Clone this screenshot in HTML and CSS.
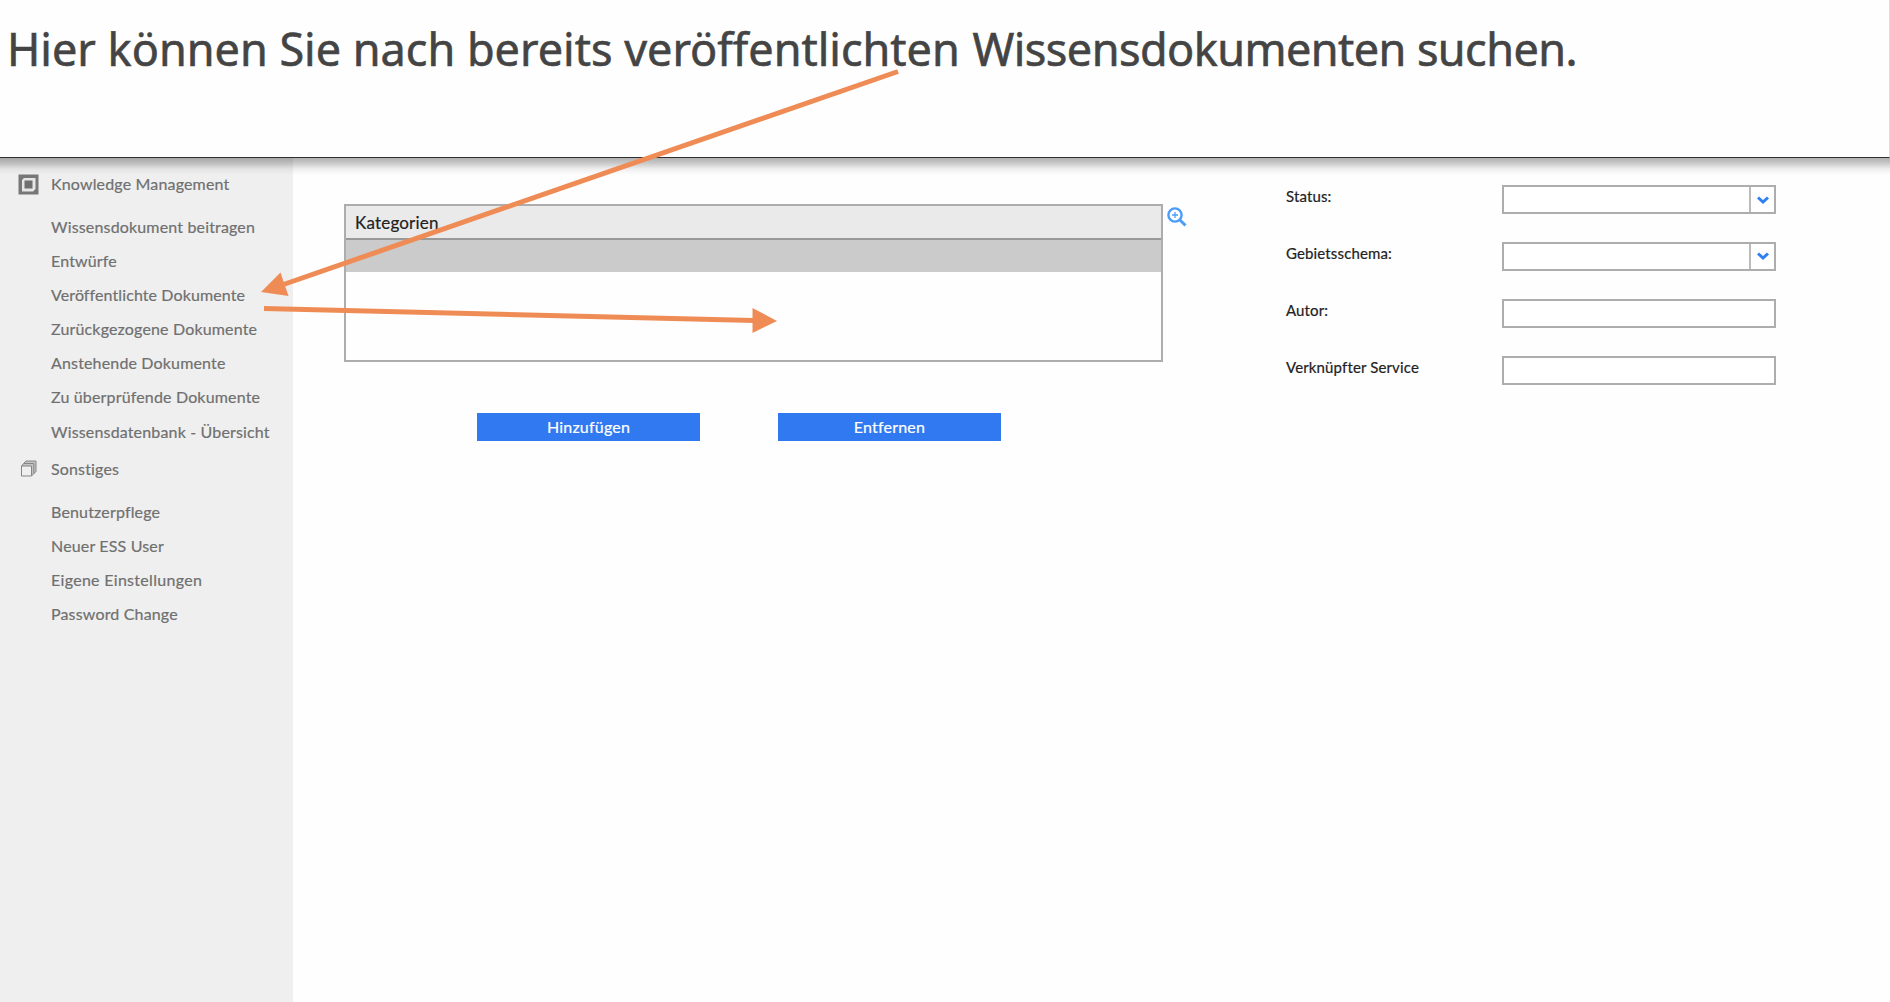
FILE: index.html
```html
<!DOCTYPE html>
<html lang="de">
<head>
<meta charset="utf-8">
<title>Wissensdokumente suchen</title>
<link rel="stylesheet" href="styles.css">
</head>
<body>
<header class="banner"><h1>Hier können Sie nach bereits veröffentlichten <span class="tight">Wissensdokumenten suchen.</span></h1></header>
<div class="workspace">
  <nav class="sidebar">
    <div class="group">
      <svg class="icon" width="21" height="21" viewBox="0 0 21 21"><path d="M0.500 0.500H20.500V20.500H0.500z" fill="#777"/><path d="M6 4H17.500V15L15 17.500H4V6z" fill="#e6e6e6"/><path d="M6.500 6.500H14.500V14.500H6.500z" fill="#6f6f6f"/></svg>
      <span>Knowledge Management</span>
    </div>
    <ul>
      <li>Wissensdokument beitragen</li>
      <li>Entwürfe</li>
      <li class="narrow">Veröffentlichte Dokumente</li>
      <li>Zurückgezogene Dokumente</li>
      <li>Anstehende Dokumente</li>
      <li>Zu überprüfende Dokumente</li>
      <li>Wissensdatenbank - Übersicht</li>
    </ul>
    <div class="group second">
      <svg class="icon" width="21" height="21" viewBox="0 0 21 21"><path d="M3.500 8L8 3H18V13.500L13.500 18V8z" fill="#c4c4c4"/><g fill="none" stroke="#858585" stroke-width="1"><path d="M3.500 8H13.500V18H3.500z" fill="#efefef"/><path d="M3.500 8L8 3H18V13.500L13.500 18M6 5.500H15.800V15.500"/></g></svg>
      <span>Sonstiges</span>
    </div>
    <ul>
      <li>Benutzerpflege</li>
      <li>Neuer ESS User</li>
      <li class="wide">Eigene Einstellungen</li>
      <li>Password Change</li>
    </ul>
  </nav>
  <main class="content">
    <section class="categories">
      <div class="tablewrap">
        <div class="table">
          <div class="head">Kategorien</div>
          <div class="row"></div>
        </div>
        <svg class="search" width="20" height="20" viewBox="0 0 20 20" fill="none" stroke="#4b9df8"><circle cx="8" cy="8" r="6.600" stroke-width="2.400"/><path d="M12.700 12.700L18.500 18.500" stroke-width="3"/><path d="M5 8H11M8 5V11" stroke-width="1.300"/></svg>
      </div>
      <div class="actions"><button>Hinzufügen</button><button>Entfernen</button></div>
    </section>
    <form class="fields">
      <div class="field"><label>Status:</label><div class="box"><i><svg width="14" height="10" viewBox="0 0 14 10"><path d="M2 2.500L7 7L12 2.500" fill="none" stroke="#2f80f5" stroke-width="3"/></svg></i></div></div>
      <div class="field"><label>Gebietsschema:</label><div class="box"><i><svg width="14" height="10" viewBox="0 0 14 10"><path d="M2 2.500L7 7L12 2.500" fill="none" stroke="#2f80f5" stroke-width="3"/></svg></i></div></div>
      <div class="field"><label>Autor:</label><div class="box"></div></div>
      <div class="field"><label>Verknüpfter Service</label><div class="box"></div></div>
    </form>
  </main>
</div>
<svg class="arrows" width="1890" height="1002" viewBox="0 0 1890 1002">
  <g stroke="#ef8c55" stroke-width="5"><path d="M898 71.500L282 285"/><path d="M264 308.500L754 320.500"/></g>
  <g fill="#ef8c55"><path d="M261 292L280.500 272.500L288.500 296z"/><path d="M777 321L752.500 308V333z"/></g>
</svg>
</body>
</html>
```
FILE: styles.css
```css
* { box-sizing: border-box; }
body { margin: 0; width: 1890px; height: 1002px; overflow: hidden; display: flex; flex-direction: column; background: #fefefe; font-family: Lato, sans-serif; font-size: 16px; }
.banner { height: 158px; border-bottom: 1px solid #303030; border-right: 1px solid #ddd; padding: 18px 0 0 7px; background: #fefefe; }
h1 { margin: 0; font: 400 45px/62px "Noto Sans", sans-serif; color: #444; white-space: nowrap; -webkit-text-stroke: 0.6px #444; }
.tight { margin-left: 1px; letter-spacing: -0.56px; }
.workspace { flex: 1; display: flex; background: linear-gradient(#b0b0b0, #c8c8c8 5px, #eee 11px, #fefefe 17px); }
.sidebar { width: 293px; padding-top: 9px; background: linear-gradient(#a7a7a7, #bdbdbd 5px, #e3e3e3 11px, #efefef 17px); color: #707070; letter-spacing: 0.16px; -webkit-text-stroke: 0.2px; }
.group { height: 34px; display: flex; align-items: center; padding-left: 18px; gap: 12px; }
.group span { padding-bottom: 1px; }
.second { margin-top: 3px; }
ul { list-style: none; margin: 9px 0 0; padding: 0 0 0 51px; }
li { height: 34.100px; line-height: 34.100px; white-space: nowrap; }
.wide { letter-spacing: 0.3px; }
.narrow { letter-spacing: 0.1px; }
.content { flex: 1; display: flex; padding-left: 51px; }
.categories { width: 941px; padding-top: 46px; }
.tablewrap { display: flex; gap: 4px; }
.table { width: 819px; height: 158px; border: 2px solid #adadad; }
.head { height: 34px; padding-left: 9px; line-height: 33px; font-size: 17px; letter-spacing: 0.2px; background: #eaeaea; border-bottom: 2px solid #999; color: #222; -webkit-text-stroke: 0.2px; }
.row { height: 32px; background: #cbcbcb; }
.search { margin-top: 3px; }
.actions { display: flex; gap: 77px; padding: 51px 0 0 133px; }
button { width: 223px; height: 28px; border: 0; padding: 0; background: #3079f0; color: #fff; font: 16px/28px Lato, sans-serif; letter-spacing: 0.2px; -webkit-text-stroke: 0.2px; }
button + button { margin-left: 1px; }
.fields { padding-top: 27px; }
.field { display: flex; height: 56.900px; }
label { width: 217px; padding-left: 1px; color: #222; line-height: 22px; font-size: 15px; letter-spacing: 0.14px; -webkit-text-stroke: 0.2px; }
.box { width: 274px; height: 29px; border: 2px solid #adadad; display: flex; justify-content: flex-end; background: #fff; }
.box i { width: 25px; border-left: 2px solid #bbb; display: grid; place-items: center; }
.arrows { position: absolute; left: 0; top: 0; pointer-events: none; }
```
